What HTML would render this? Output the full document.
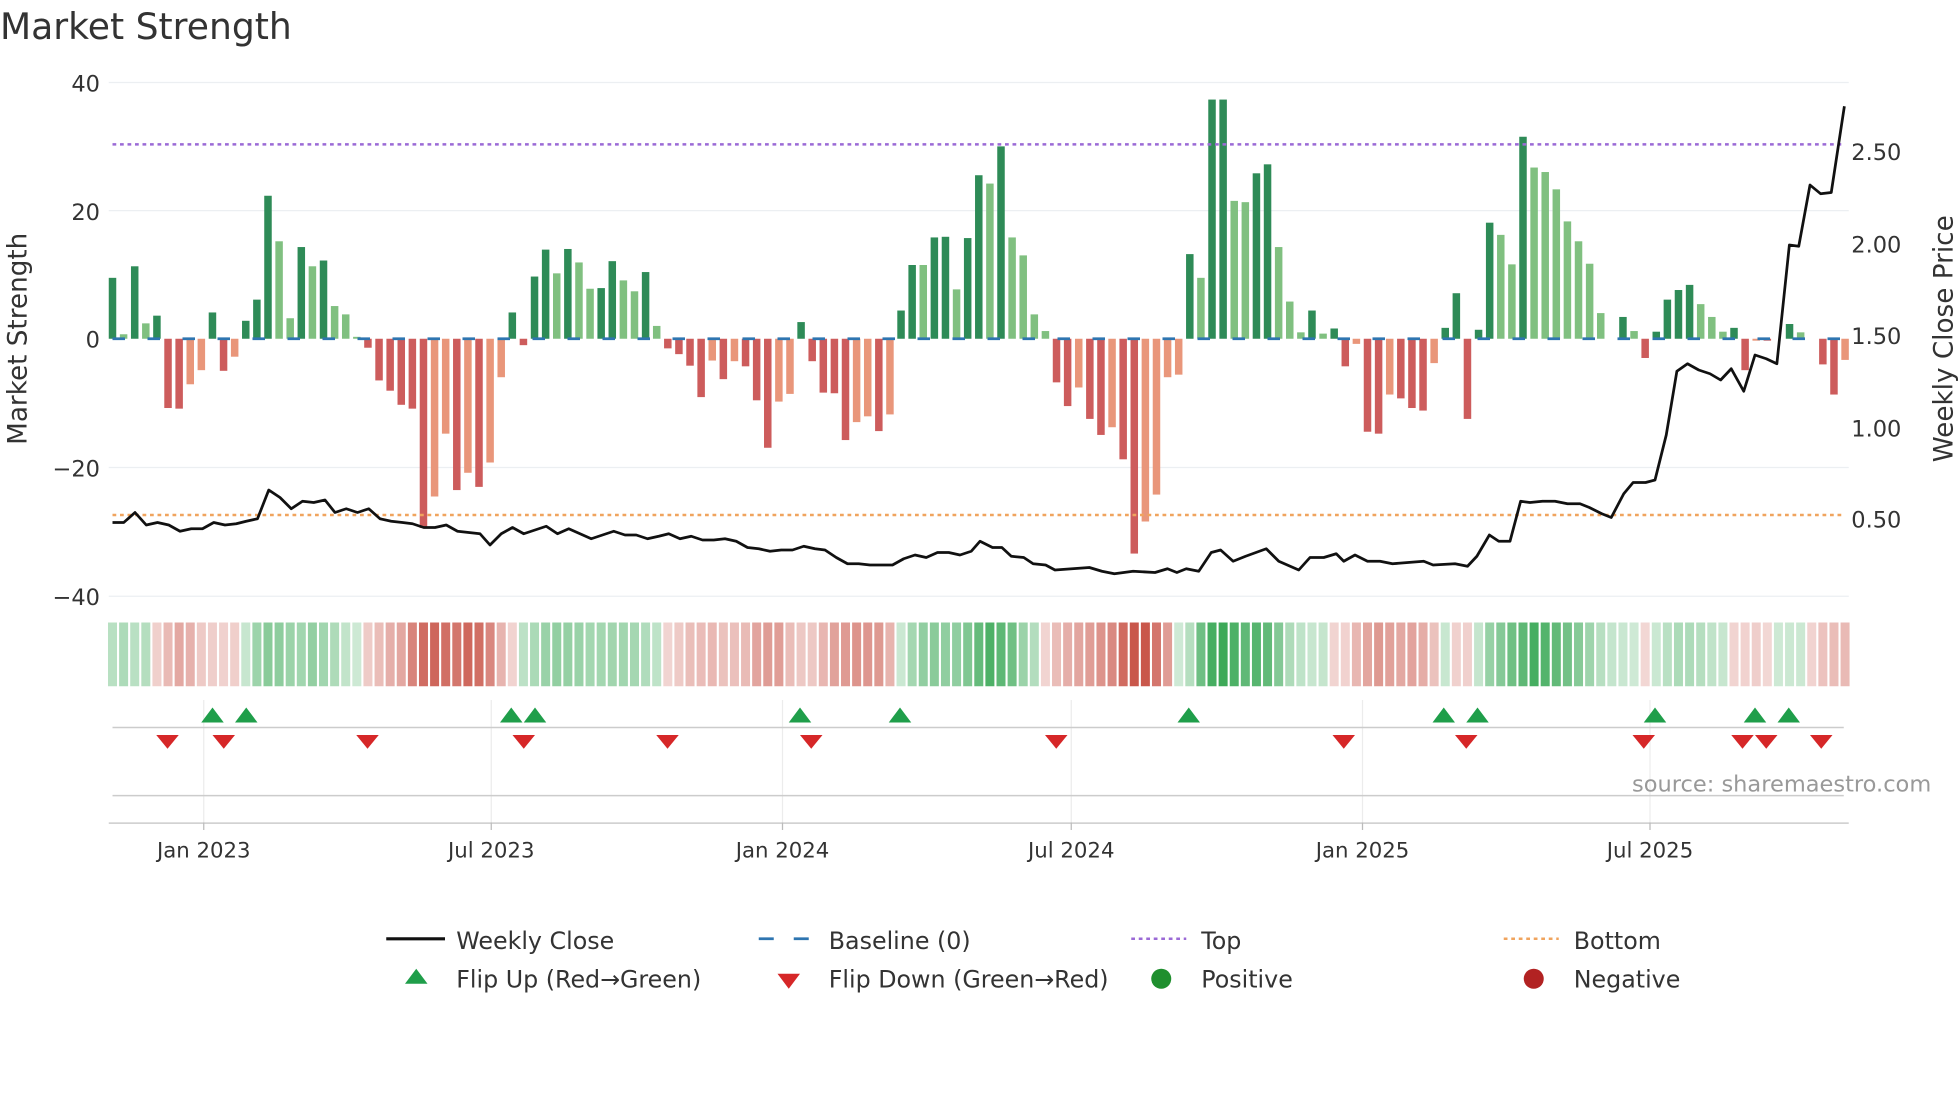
<!DOCTYPE html>
<html><head><meta charset="utf-8"><style>
html,body{margin:0;padding:0;background:#fff;width:1960px;height:1102px;overflow:hidden}
svg{display:block}
text{font-family:"DejaVu Sans","Liberation Sans",sans-serif;fill:#333}
</style></head><body>
<svg id="s" width="1960" height="1102" viewBox="0 0 1568 881.6" xmlns="http://www.w3.org/2000/svg">
<rect width="1568" height="882" fill="#fff"/>
<text x="0" y="31" font-size="28.9">Market Strength</text>
<g stroke="#eceff2" stroke-width="1">
<line x1="87" y1="66" x2="1479" y2="66"/><line x1="87" y1="168.5" x2="1479" y2="168.5"/>
<line x1="87" y1="374" x2="1479" y2="374"/><line x1="87" y1="477" x2="1479" y2="477"/>
</g>
<g font-size="18" text-anchor="end">
<text x="80" y="73">40</text><text x="80" y="176">20</text><text x="80" y="278">0</text>
<text x="80" y="381">−20</text><text x="80" y="484">−40</text>
</g>
<g font-size="18">
<text x="1481" y="128">2.50</text><text x="1481" y="202">2.00</text><text x="1481" y="275">1.50</text>
<text x="1481" y="349">1.00</text><text x="1481" y="422">0.50</text>
</g>
<text transform="translate(21,271) rotate(-90)" font-size="21" text-anchor="middle">Market Strength</text>
<text transform="translate(1562,271) rotate(-90)" font-size="21" text-anchor="middle">Weekly Close Price</text>
<g id="bars"></g>
<line x1="90" y1="115.5" x2="1476" y2="115.5" stroke="#9b6ad6" stroke-width="2" stroke-dasharray="3 3"/>
<line x1="90" y1="412" x2="1476" y2="412" stroke="#f0a45e" stroke-width="2" stroke-dasharray="3 3"/>
<line x1="90" y1="271" x2="1476" y2="271" stroke="#2e75b0" stroke-width="2.2" stroke-dasharray="10 18"/>
<polyline id="price" fill="none" stroke="#111" stroke-width="2.2" stroke-linejoin="round"/>
<g id="strip"></g>
<g stroke="#ececec" stroke-width="1">
<line x1="163" y1="560" x2="163" y2="658"/><line x1="393" y1="560" x2="393" y2="658"/>
<line x1="626" y1="560" x2="626" y2="658"/><line x1="857" y1="560" x2="857" y2="658"/>
<line x1="1090" y1="560" x2="1090" y2="658"/><line x1="1320" y1="560" x2="1320" y2="658"/>
</g>
<line x1="90" y1="582" x2="1475" y2="582" stroke="#ccc" stroke-width="1.2"/>
<line x1="90" y1="636.5" x2="1475" y2="636.5" stroke="#ccc" stroke-width="1.2"/>
<line x1="87" y1="658.5" x2="1479" y2="658.5" stroke="#ccc" stroke-width="1.2"/>
<g stroke="#bbb"><line x1="163" y1="658" x2="163" y2="664"/><line x1="393" y1="658" x2="393" y2="664"/><line x1="626" y1="658" x2="626" y2="664"/><line x1="857" y1="658" x2="857" y2="664"/><line x1="1090" y1="658" x2="1090" y2="664"/><line x1="1320" y1="658" x2="1320" y2="664"/></g>
<g id="marks"></g>
<text x="1545" y="633" font-size="18" text-anchor="end" style="fill:#999">source: sharemaestro.com</text>
<g font-size="17" text-anchor="middle">
<text x="163" y="686">Jan 2023</text><text x="393" y="686">Jul 2023</text><text x="626" y="686">Jan 2024</text>
<text x="857" y="686">Jul 2024</text><text x="1090" y="686">Jan 2025</text><text x="1320" y="686">Jul 2025</text>
</g>
<g font-size="19">
<line x1="309" y1="751" x2="356" y2="751" stroke="#111" stroke-width="2.5"/>
<text x="365" y="759">Weekly Close</text>
<line x1="607" y1="751" x2="651" y2="751" stroke="#2e75b0" stroke-width="2.2" stroke-dasharray="12 16"/>
<text x="663" y="759">Baseline (0)</text>
<line x1="905" y1="751" x2="949" y2="751" stroke="#9b6ad6" stroke-width="2" stroke-dasharray="3 3"/>
<text x="961" y="759">Top</text>
<line x1="1203" y1="751" x2="1247" y2="751" stroke="#f0a45e" stroke-width="2" stroke-dasharray="3 3"/>
<text x="1259" y="759">Bottom</text>
<polygon points="324,787 342,787 333,775" fill="#1f9e4a"/>
<text x="365" y="790">Flip Up (Red→Green)</text>
<polygon points="622,779 640,779 631,791" fill="#d62728"/>
<text x="663" y="790">Flip Down (Green→Red)</text>
<circle cx="929" cy="783" r="8" fill="#1f8f2e"/>
<text x="961" y="790">Positive</text>
<circle cx="1227" cy="783" r="8" fill="#b22222"/>
<text x="1259" y="790">Negative</text>
</g>
</svg>
<script>
var V="9.5d,0.7l,11.3d,2.4l,3.6d,-10.8r,-10.9r,-7.1o,-4.9o,4.1d,-5r,-2.8o,2.8d,6.1d,22.3d,15.2l,3.2l,14.3d,11.3l,12.2d,5.1l,3.8l,0.3l,-1.4r,-6.5r,-8.1r,-10.3r,-10.9r,-29.5r,-24.6o,-14.8o,-23.6r,-20.9o,-23.1r,-19.3o,-6o,4.1d,-1r,9.7d,13.9d,10.2l,14d,11.9l,7.8l,7.9d,12.1d,9.1l,7.4l,10.4d,2l,-1.5r,-2.4r,-4.2r,-9.1r,-3.4o,-6.3r,-3.5o,-4.3r,-9.6r,-17r,-9.8o,-8.6o,2.6d,-3.5r,-8.4r,-8.5r,-15.8r,-13o,-12.1o,-14.4r,-11.8o,4.4d,11.5d,11.5l,15.8d,15.9d,7.7l,15.7d,25.5d,24.2l,30d,15.8l,13l,3.8l,1.2l,-6.8r,-10.5r,-7.6o,-12.5r,-15r,-13.8o,-18.8r,-33.5r,-28.5o,-24.3o,-6o,-5.6o,13.2d,9.5l,37.3d,37.3d,21.5l,21.3l,25.8d,27.2d,14.3l,5.8l,1l,4.4d,0.8l,1.6d,-4.3r,-0.8o,-14.5r,-14.8r,-8.7o,-9.3r,-10.8r,-11.2r,-3.8o,1.7d,7.1d,-12.5r,1.4d,18.1d,16.2l,11.6l,31.5d,26.7l,26l,23.3l,18.3l,15.2l,11.7l,4l,0l,3.4d,1.2l,-3r,1.1d,6.1d,7.6d,8.4d,5.4l,3.4l,1.1l,1.7d,-4.9r,-0.3o,-0.3r,0l,2.3d,1l,0l,-4r,-8.7r,-3.3o".split(",");
var C={d:"#2e8b57",l:"#80c080",r:"#cd5c5c",o:"#e9967a"};
var ns="http://www.w3.org/2000/svg",b=document.getElementById("bars"),st=document.getElementById("strip");
function R(g,x,y,w,h,f,o){var r=document.createElementNS(ns,"rect");r.setAttribute("x",x);r.setAttribute("y",y);r.setAttribute("width",w);r.setAttribute("height",h);r.setAttribute("fill",f);if(o!=null)r.setAttribute("fill-opacity",o);g.appendChild(r);}
var sp=8.885;
for(var i=0;i<V.length;i++){var v=parseFloat(V[i]),t=V[i].slice(-1),cx=90+i*sp;
 var h=Math.abs(v)*5.13;R(b,cx-3,v>=0?271-h:271,6,h,C[t]);}
for(var i=0;i<V.length;i++){var s=0,n=0;for(var k=i-1;k<=i+1;k++){if(k>=0&&k<V.length){s+=parseFloat(V[k]);n++;}}s/=n;
 var cx=90+i*sp,a;
 if(s>=0){a=0.22+0.7*Math.min(s/30,1);R(st,cx-3.6,498,7.2,51,"#2ca24a",a);}
 else{a=0.2+0.65*Math.min(-s/26,1);R(st,cx-3.6,498,7.2,51,"#c0392b",a);}}
var P=[[90,418],[99,418],[108,410],[117,420],[126,418],[135,420],[144,425],[153,423],[162,423],[171,418],[180,420],[189,419],[197,417],[206,415],[215,392],[224,398],[233,407],[242,401],[251,402],[260,400],[268,410],[277,407],[286,410],[295,407],[304,415],[313,417],[322,418],[330,419],[339,422],[348,422],[357,420],[366,425],[375,426],[384,427],[392,436],[401,427],[410,422],[419,427],[428,424],[437,421],[446,427],[455,423],[464,427],[473,431],[482,428],[491,425],[500,428],[509,428],[518,431],[527,429],[535,427],[544,431],[553,429],[562,432],[571,432],[580,431],[589,433],[598,438],[607,439],[616,441],[625,440],[634,440],[643,437],[652,439],[660,440],[669,446],[678,451],[687,451],[696,452],[705,452],[714,452],[723,447],[732,444],[741,446],[750,442],[759,442],[768,444],[777,441],[784,433],[794,438],[801.5,438],[809,445],[819,446],[826.5,451],[836.5,452],[844,456],[871.5,454],[881.5,457],[891.5,459],[906.5,457],[924,458],[934,455],[941.5,458],[949,455],[959,457],[969,442],[976.5,440],[986.5,449],[996.5,445],[1013,439],[1023,449],[1039,456],[1048,446],[1059,446],[1069,443],[1075,449],[1084,444],[1094,449],[1104,449],[1114,451],[1139,449],[1146.5,452],[1164,451],[1174,453],[1181.5,445],[1191.5,428],[1199,433],[1208,433],[1216.5,401],[1224,402],[1234,401],[1244,401],[1254,403],[1264,403],[1271.5,406],[1281.5,411],[1289,414],[1299,395],[1306.5,386],[1316.5,386],[1324,384],[1333,348],[1341.5,297],[1350,291],[1359,296],[1368,299],[1376.5,304],[1385,295],[1395,313],[1404,284],[1413,287],[1421.5,291],[1431.5,196],[1439,197],[1448,148],[1456.5,155],[1465,154],[1475.5,85]];
document.getElementById("price").setAttribute("points",P.map(function(p){return p.join(",")}).join(" "));
var m=document.getElementById("marks");
function T(pts,f){var p=document.createElementNS(ns,"polygon");p.setAttribute("points",pts);p.setAttribute("fill",f);m.appendChild(p);}
[170,197,409,428,640,720,951,1155,1182,1324,1404,1431].forEach(function(x){T((x-9)+",578 "+(x+9)+",578 "+x+",566","#1f9e4a");});
[134,179,294,419,534,649,845,1075,1173,1315,1394,1413,1457].forEach(function(x){T((x-9)+",588 "+(x+9)+",588 "+x+",599","#d62728");});
</script>
</body></html>
